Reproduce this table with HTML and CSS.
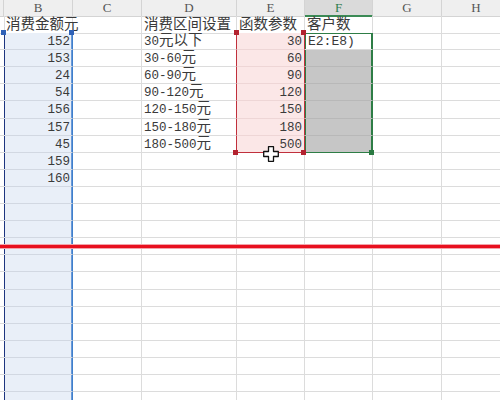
FILE: index.html
```html
<!DOCTYPE html>
<html lang="zh">
<head>
<meta charset="utf-8">
<title>Sheet</title>
<link rel="stylesheet" href="styles.css">
</head>
<body>
<div class="sheet">
  <div class="row hdr">
    <div class="c"></div><div class="c">B</div><div class="c">C</div><div class="c">D</div><div class="c">E</div><div class="c act">F</div><div class="c">G</div><div class="c">H</div>
  </div>
  <div class="row labels">
    <div class="c"></div>
    <div class="c b-top"><span class="cj">消费金额元</span></div>
    <div class="c"></div>
    <div class="c"><span class="cj">消费区间设置</span></div>
    <div class="c e-top"><span class="cj">函数参数</span></div>
    <div class="c f-top"><span class="cj">客户数</span></div>
    <div class="c"></div><div class="c"></div>
  </div>
  <div class="row">
    <div class="c a-edge"></div>
    <div class="c sb num">152<span class="hd hb tl"></span><span class="hd hb tr"></span></div>
    <div class="c"></div>
    <div class="c d-edge">30<span class="cj">元以下</span></div>
    <div class="c se num">30<span class="hd hr tl"></span><span class="hd hr tr"></span></div>
    <div class="c sf formula">E2:E8)</div>
    <div class="c"></div><div class="c"></div>
  </div>
  <div class="row">
    <div class="c a-edge"></div>
    <div class="c sb num">153</div>
    <div class="c"></div>
    <div class="c d-edge">30-60<span class="cj">元</span></div>
    <div class="c se num">60</div>
    <div class="c sf gray"></div>
    <div class="c"></div><div class="c"></div>
  </div>
  <div class="row">
    <div class="c a-edge"></div>
    <div class="c sb num">24</div>
    <div class="c"></div>
    <div class="c d-edge">60-90<span class="cj">元</span></div>
    <div class="c se num">90</div>
    <div class="c sf gray"></div>
    <div class="c"></div><div class="c"></div>
  </div>
  <div class="row">
    <div class="c a-edge"></div>
    <div class="c sb num">54</div>
    <div class="c"></div>
    <div class="c d-edge">90-120<span class="cj">元</span></div>
    <div class="c se num">120</div>
    <div class="c sf gray"></div>
    <div class="c"></div><div class="c"></div>
  </div>
  <div class="row">
    <div class="c a-edge"></div>
    <div class="c sb num">156</div>
    <div class="c"></div>
    <div class="c d-edge">120-150<span class="cj">元</span></div>
    <div class="c se num">150</div>
    <div class="c sf gray"></div>
    <div class="c"></div><div class="c"></div>
  </div>
  <div class="row">
    <div class="c a-edge"></div>
    <div class="c sb num">157</div>
    <div class="c"></div>
    <div class="c d-edge">150-180<span class="cj">元</span></div>
    <div class="c se num">180</div>
    <div class="c sf gray"></div>
    <div class="c"></div><div class="c"></div>
  </div>
  <div class="row">
    <div class="c a-edge"></div>
    <div class="c sb num">45</div>
    <div class="c"></div>
    <div class="c d-edge">180-500<span class="cj">元</span></div>
    <div class="c se se-last num">500<span class="hd hr bl"></span><span class="hd hr br"></span>
      <svg class="cursor" width="16" height="16" viewBox="0 0 16 16"><path d="M5.5 0.7h5v4.8h4.8v5h-4.8v4.8h-5v-4.8h-4.8v-5h4.8z" fill="#fff" stroke="#111" stroke-width="1.3" stroke-linejoin="round"/></svg>
    </div>
    <div class="c sf sf-last gray"><span class="hd hg br"></span></div>
    <div class="c"></div><div class="c"></div>
  </div>
  <div class="row"><div class="c a-edge"></div><div class="c sb num">159</div><div class="c"></div><div class="c"></div><div class="c"></div><div class="c"></div><div class="c"></div><div class="c"></div></div>
  <div class="row"><div class="c a-edge"></div><div class="c sb num">160</div><div class="c"></div><div class="c"></div><div class="c"></div><div class="c"></div><div class="c"></div><div class="c"></div></div>
  <div class="row"><div class="c a-edge"></div><div class="c sb"></div><div class="c"></div><div class="c"></div><div class="c"></div><div class="c"></div><div class="c"></div><div class="c"></div></div>
  <div class="row"><div class="c a-edge"></div><div class="c sb"></div><div class="c"></div><div class="c"></div><div class="c"></div><div class="c"></div><div class="c"></div><div class="c"></div></div>
  <div class="row"><div class="c a-edge"></div><div class="c sb"></div><div class="c"></div><div class="c"></div><div class="c"></div><div class="c"></div><div class="c"></div><div class="c"></div></div>
  <div class="row"><div class="c a-edge"></div><div class="c sb"></div><div class="c"></div><div class="c"></div><div class="c"></div><div class="c"></div><div class="c"></div><div class="c"></div></div>
  <div class="row"><div class="c a-edge"></div><div class="c sb"></div><div class="c"></div><div class="c"></div><div class="c"></div><div class="c"></div><div class="c"></div><div class="c"></div></div>
  <div class="row"><div class="c a-edge"></div><div class="c sb"></div><div class="c"></div><div class="c"></div><div class="c"></div><div class="c"></div><div class="c"></div><div class="c"></div></div>
  <div class="row"><div class="c a-edge"></div><div class="c sb"></div><div class="c"></div><div class="c"></div><div class="c"></div><div class="c"></div><div class="c"></div><div class="c"></div></div>
  <div class="row"><div class="c a-edge"></div><div class="c sb"></div><div class="c"></div><div class="c"></div><div class="c"></div><div class="c"></div><div class="c"></div><div class="c"></div></div>
  <div class="row"><div class="c a-edge"></div><div class="c sb"></div><div class="c"></div><div class="c"></div><div class="c"></div><div class="c"></div><div class="c"></div><div class="c"></div></div>
  <div class="row"><div class="c a-edge"></div><div class="c sb"></div><div class="c"></div><div class="c"></div><div class="c"></div><div class="c"></div><div class="c"></div><div class="c"></div></div>
  <div class="row"><div class="c a-edge"></div><div class="c sb"></div><div class="c"></div><div class="c"></div><div class="c"></div><div class="c"></div><div class="c"></div><div class="c"></div></div>
  <div class="row"><div class="c a-edge"></div><div class="c sb"></div><div class="c"></div><div class="c"></div><div class="c"></div><div class="c"></div><div class="c"></div><div class="c"></div></div>
  <div class="row"><div class="c a-edge"></div><div class="c sb"></div><div class="c"></div><div class="c"></div><div class="c"></div><div class="c"></div><div class="c"></div><div class="c"></div></div>
  <div class="row"><div class="c a-edge"></div><div class="c sb"></div><div class="c"></div><div class="c"></div><div class="c"></div><div class="c"></div><div class="c"></div><div class="c"></div></div>
  <div class="mark"></div>
</div>
</body>
</html>
```
FILE: styles.css
```css
* { box-sizing: border-box; }

body {
  margin: 0;
  width: 500px;
  height: 400px;
  overflow: hidden;
  background: #fff;
  color: #3a3a3a;
  font-family: "Liberation Mono", "Noto Sans CJK SC", monospace;
}

.sheet {
  position: relative;
  width: 500px;
  height: 400px;
  overflow: hidden;
}

.row {
  display: grid;
  grid-template-columns: 4px 69px 69px 95px 68px 68px 69px 69px;
  height: 17.1px;
}

.c {
  position: relative;
  border-right: 1px solid #dcdcdc;
  border-bottom: 1px solid #dcdcdc;
  padding: 2px 2px 0 2px;
  font-size: 12.5px;
  line-height: 14px;
  white-space: nowrap;
}

.cj {
  display: inline-block;
  font-size: 14.5px;
  line-height: 14px;
  vertical-align: top;
  margin-top: -1px;
}

.labels .c { padding-top: 3px; }

.num { text-align: right; padding-right: 2px; }

/* column header row */
.hdr { height: 16px; background: #efefef; }
.hdr .c {
  padding: 0;
  font-family: "Liberation Serif", serif;
  font-size: 13px;
  line-height: 15px;
  text-align: center;
  color: #555;
  border-color: #d4d4d4;
}
.hdr .act {
  background: #dadada;
  color: #2f7d4c;
  border-bottom: 2px solid #3b8a55;
}

/* B range (blue reference) */
.b-top { border-bottom-color: #3d6fc2; }
.a-edge { border-right-color: #1d3580; }
.sb {
  background: #e9eff8;
  border-bottom-color: #d2d8e2;
  border-right-color: #3f7fcc;
  box-shadow: inset 1px 0 0 #1d3580, inset -1px 0 0 #6a9ad8;
}

/* E range (red reference) */
.e-top { border-bottom-color: #c0303c; }
.d-edge { border-right-color: #c0303c; }
.se {
  background: #fbe7e7;
  border-bottom-color: #eed6d6;
  border-right-color: #c0303c;
}
.se-last { border-bottom-color: #c0303c; }

/* F range (active selection) */
.f-top { border-bottom-color: #2e7d46; }
.sf {
  border-right-color: #2e7d46;
  box-shadow: inset 1px 0 0 #2e7d46, inset -1px 0 0 #2e7d46;
}
.sf.gray { background: #c6c6c6; border-bottom-color: #b8b8b8; }
.sf-last.gray { border-bottom-color: #2e7d46; }
.formula { font-family: "Liberation Mono", monospace; font-size: 13px; padding-left: 3px; }

/* range handles */
.hd {
  position: absolute;
  width: 5px;
  height: 5px;
  z-index: 2;
}
.hb { background: #2f62b8; }
.hr { background: #b3222f; }
.hg { background: #2a7a42; }
.tl { left: -3px; top: -3px; }
.tr { right: -2px; top: -3px; }
.bl { left: -4px; bottom: -3px; }
.br { right: -2px; bottom: -3px; }

.cursor {
  position: absolute;
  left: 26px;
  top: 10px;
  z-index: 3;
}

/* red annotation line drawn over the sheet */
.mark {
  position: absolute;
  left: 0;
  right: 0;
  top: 244px;
  height: 5px;
  z-index: 4;
  background: linear-gradient(#f3a3aa 0 1px, #e8101f 1px 4px, #f3a3aa 4px);
}
```
